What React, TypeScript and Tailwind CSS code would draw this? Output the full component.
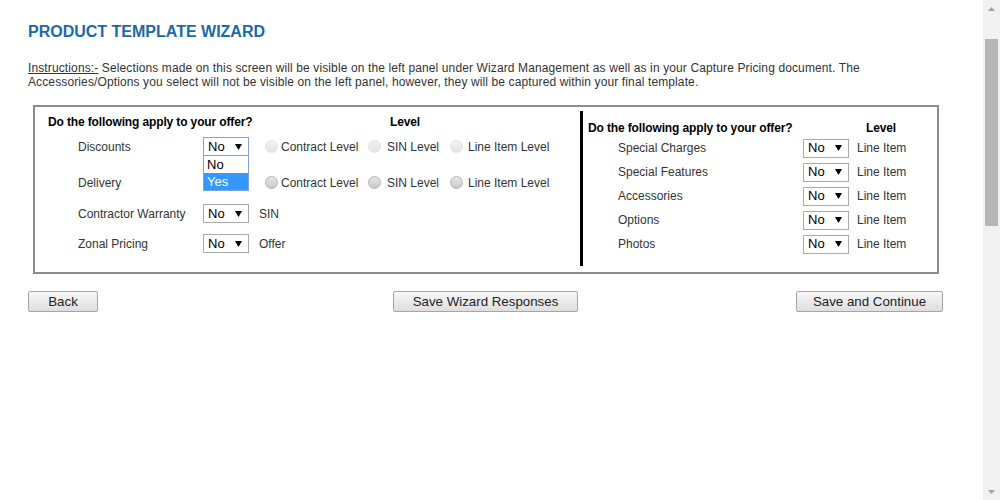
const font = "font-['Liberation_Sans',Arial,sans-serif]";

const Arrow = () => (
    <svg width="7" height="6" viewBox="0 0 7 6">
        <path d="M0 0h7L3.5 6z" fill="#000" />
    </svg>
);

const Select = ({ focused = false, open = false }: { focused?: boolean; open?: boolean }) => (
    <div className="relative">
        <div
            className={`w-[46px] h-[19px] border bg-white flex items-center justify-between pl-[4px] pr-[6px] text-[13px] text-black ${
                focused ? "border-[#7ea4d4]" : "border-[#a9a9a9]"
            }`}
        >
            <span>No</span>
            <Arrow />
        </div>
        {open && (
            <div className="absolute left-0 top-[18px] w-[46px] border border-[#7ea4d4] bg-white z-10 text-[13px]">
                <div className="h-[17px] pl-[3px] flex items-center text-black">No</div>
                <div className="h-[17px] pl-[3px] flex items-center bg-[#3399ff] text-white">Yes</div>
            </div>
        )}
    </div>
);

const Radio = ({ dim = false }: { dim?: boolean }) => (
    <span
        className={`inline-block w-[13px] h-[13px] rounded-full border ${
            dim
                ? "border-[#e2e2e2] bg-linear-to-b from-[#f2f2f2] to-[#e4e4e4]"
                : "border-[#b3b3b3] bg-linear-to-b from-[#e6e6e6] to-[#c9c9c9]"
        }`}
    />
);

const RadioGroup = ({ dim = false }: { dim?: boolean }) => (
    <div className="flex items-center ml-[16px]">
        <Radio dim={dim} />
        <span className="ml-[3px] w-[87px]">Contract Level</span>
        <Radio dim={dim} />
        <span className="ml-[6px] w-[63px]">SIN Level</span>
        <Radio dim={dim} />
        <span className="ml-[5px]">Line Item Level</span>
    </div>
);

const LeftRow = ({ label, h, children }: { label: string; h: string; children: React.ReactNode }) => (
    <div className={`flex items-center pl-[43px] ${h}`}>
        <span className="w-[125px]">{label}</span>
        {children}
    </div>
);

const rightItems = ["Special Charges", "Special Features", "Accessories", "Options", "Photos"];

const Button = ({ label, w, place }: { label: string; w: string; place: string }) => (
    <button
        className={`${w} ${place} h-[21px] border border-[#a6a6a6] rounded-[2px] bg-linear-to-b from-[#f7f7f7] to-[#dedede] text-[13.3px] text-[#222] flex items-center justify-center`}
    >
        {label}
    </button>
);

const Scrollbar = () => (
    <div className="w-[17px] h-full bg-[#f1f1f1] flex flex-col items-center">
        <div className="h-[17px] flex items-center justify-center">
            <svg width="7" height="4" viewBox="0 0 7 4">
                <path d="M0 4h7L3.5 0z" fill="#a3a3a3" />
            </svg>
        </div>
        <div className="mt-[22px] w-[13px] h-[187px] bg-[#b5b5b5]" />
        <div className="flex-1" />
        <div className="h-[17px] flex items-center justify-center">
            <svg width="7" height="4" viewBox="0 0 7 4">
                <path d="M0 0h7L3.5 4z" fill="#a3a3a3" />
            </svg>
        </div>
    </div>
);

export default function App() {
    return (
        <div className={`w-[1000px] h-[500px] flex bg-white overflow-hidden ${font}`}>
            <div className="flex-1">
                <div className="ml-[28px] w-[915px]">
                    <h1 className="mt-[23px] text-[16px] leading-[18px] font-bold text-[#1a6aa6]">
                        PRODUCT TEMPLATE WIZARD
                    </h1>
                    <p className="mt-[20px] text-[12px] leading-[14px] tracking-[0.12px] text-[#333] pr-[50px]">
                        <span className="underline">Instructions:-</span> Selections made on this screen will be visible
                        on the left panel under Wizard Management as well as in your Capture Pricing document. The
                        Accessories/Options you select will not be visible on the left panel, however, they will be
                        captured within your final template.
                    </p>

                    <div className="mt-[16px] ml-[5px] w-[906px] h-[169px] border-2 border-[#8c8c8c] flex items-start text-[12px] text-[#333]">
                        <div className="w-[545px]">
                            <div className="mt-[8px] h-[14px] flex items-center pl-[13px] font-bold text-black tracking-[-0.13px]">
                                <span className="w-[342px]">Do the following apply to your offer?</span>
                                <span>Level</span>
                            </div>
                            <LeftRow label="Discounts" h="h-[35px]">
                                <Select focused open />
                                <RadioGroup dim />
                            </LeftRow>
                            <LeftRow label="Delivery" h="h-[37px]">
                                <div className="w-[46px]" />
                                <RadioGroup />
                            </LeftRow>
                            <LeftRow label="Contractor Warranty" h="h-[25px]">
                                <Select />
                                <span className="ml-[10px]">SIN</span>
                            </LeftRow>
                            <LeftRow label="Zonal Pricing" h="h-[35px]">
                                <Select />
                                <span className="ml-[10px]">Offer</span>
                            </LeftRow>
                        </div>

                        <div className="mt-[4px] w-[357px] border-l-[3px] border-black pt-[10px] pb-[10px]">
                            <div className="h-[14px] flex items-center pl-[5px] font-bold text-black tracking-[-0.13px]">
                                <span className="w-[278px]">Do the following apply to your offer?</span>
                                <span>Level</span>
                            </div>
                            <div className="pt-[1px]">
                                {rightItems.map((item) => (
                                    <div key={item} className="h-[24px] flex items-center pl-[35px]">
                                        <span className="w-[185px]">{item}</span>
                                        <Select />
                                        <span className="ml-[8px]">Line Item</span>
                                    </div>
                                ))}
                            </div>
                        </div>
                    </div>

                    <div className="mt-[17px] grid grid-cols-3 items-center">
                        <Button label="Back" w="w-[70px]" place="justify-self-start" />
                        <Button label="Save Wizard Responses" w="w-[185px]" place="justify-self-center" />
                        <Button label="Save and Continue" w="w-[147px]" place="justify-self-end" />
                    </div>
                </div>
            </div>
            <Scrollbar />
        </div>
    );
}
